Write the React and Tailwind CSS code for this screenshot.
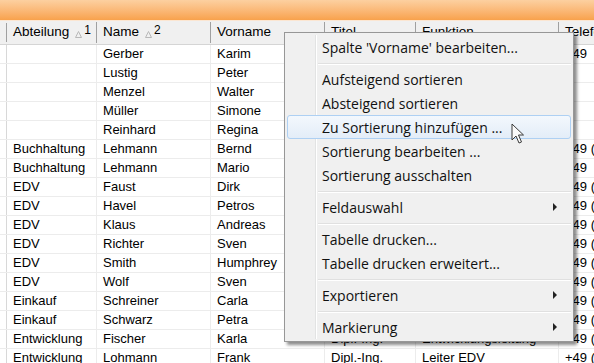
import React from 'react';

const rows = [
  ['', 'Gerber', 'Karim', '', '', '+49'],
  ['', 'Lustig', 'Peter', '', '', ''],
  ['', 'Menzel', 'Walter', '', '', ''],
  ['', 'Müller', 'Simone', '', '', ''],
  ['', 'Reinhard', 'Regina', '', '', ''],
  ['Buchhaltung', 'Lehmann', 'Bernd', 'Dipl.-Kfm.', 'Buchhalter', '+49 (0) 30'],
  ['Buchhaltung', 'Lehmann', 'Mario', '', 'Buchhalter', '+49'],
  ['EDV', 'Faust', 'Dirk', '', 'Administrator', '+49 (0) 30'],
  ['EDV', 'Havel', 'Petros', '', 'Entwickler', '+49 (0) 30'],
  ['EDV', 'Klaus', 'Andreas', '', 'Entwickler', '+49 (0) 30'],
  ['EDV', 'Richter', 'Sven', '', 'Support', '+49 (0) 30'],
  ['EDV', 'Smith', 'Humphrey', '', 'Support', '+49 (0) 30'],
  ['EDV', 'Wolf', 'Sven', '', 'Entwickler', '+49 (0) 30'],
  ['Einkauf', 'Schreiner', 'Carla', '', 'Einkauf', '+49 (0) 30'],
  ['Einkauf', 'Schwarz', 'Petra', '', 'Einkauf', '+49 (0) 30'],
  ['Entwicklung', 'Fischer', 'Karla', 'Dipl.-Ing.', 'Entwicklungsleitung', '+49 (0) 30'],
  ['Entwicklung', 'Lohmann', 'Frank', 'Dipl.-Ing.', 'Leiter EDV', '+49 (0) 30'],
];

const widths = ['w-[90px]', 'w-[114px]', 'w-[114px]', 'w-[91px]', 'w-[143px]', 'w-[80px]'];

function SortMark({ n }) {
  return (
    <span className="ml-[6px] flex items-start h-[14px]">
      <svg width="7" height="7" viewBox="0 0 7 7" className="mt-[5px]">
        <path d="M0.5 6.5 L3.5 0.5 L6.5 6.5 Z" fill="none" stroke="#b8b8b8" strokeWidth="1" />
      </svg>
      <span className="ml-[2px] text-[12px] leading-[9px]">{n}</span>
    </span>
  );
}

function Header() {
  const cols = [
    ['Abteilung', 1],
    ['Name', 2],
    ['Vorname'],
    ['Titel'],
    ['Funktion'],
    ['Telefon'],
  ];
  return (
    <div className="flex h-[25px] bg-[#f0f0f0] border-t border-t-[#fbe6d2] border-b border-b-[#d5d5d5] text-[13.5px]">
      <div className="w-[7px] shrink-0 border-r border-[#a0a0a0] my-[2px]" />
      {cols.map(([label, n], i) => (
        <div
          key={label}
          className={`${widths[i]} shrink-0 flex items-center pl-[6px] ${i < 5 ? 'border-r border-[#a0a0a0]' : ''} my-[1px]`}
        >
          <span>{label}</span>
          {n && <SortMark n={n} />}
        </div>
      ))}
    </div>
  );
}

function Row({ cells }) {
  return (
    <div className="flex h-[19px] border-b border-[#ececec]">
      <div className="w-[7px] shrink-0 border-r border-[#d8d8d8]" />
      {cells.map((c, i) => (
        <div
          key={i}
          className={`${widths[i]} shrink-0 flex items-center pl-[6px] whitespace-nowrap overflow-hidden ${i < 5 ? 'border-r border-[#ececec]' : ''}`}
        >
          {c}
        </div>
      ))}
    </div>
  );
}

function Arrow() {
  return (
    <svg width="5" height="8" viewBox="0 0 5 8">
      <path d="M0 0 L4 4 L0 8 Z" fill="#222" />
    </svg>
  );
}

function Item({ label, active, sub }) {
  return (
    <div
      className={`relative h-[24px] flex items-center pl-[34px] pr-[12px] rounded-[3px] border ${
        active
          ? 'border-[#aed0f3] bg-gradient-to-b from-[#f3f8fd] to-[#e3edf8]'
          : 'border-transparent'
      }`}
    >
      <span className="flex-1">{label}</span>
      {sub && <Arrow />}
    </div>
  );
}

function Sep() {
  return (
    <div className="h-[8px] pl-[31px] pt-[4px]">
      <div className="h-[1px] bg-[#e0e0e0] border-b border-white box-content" />
    </div>
  );
}

function Menu() {
  return (
    <div
      className="absolute left-[284px] top-[32px] w-[290px] bg-[#f0f0f0] border border-[#979797] p-[2px] shadow-[3px_3px_3px_rgba(0,0,0,0.45)] text-[#111]"
      style={{ fontFamily: '"Open Sans", "Noto Sans", sans-serif' }}
    >
      <div className="absolute left-[30px] top-[2px] bottom-[2px] w-[2px] border-l border-[#e2e3e3] bg-[#f0f0f0]">
        <div className="h-full w-[1px] bg-white" />
      </div>
      <div className="relative text-[14px]">
        <Item label="Spalte 'Vorname' bearbeiten..." />
        <Sep />
        <Item label="Aufsteigend sortieren" />
        <Item label="Absteigend sortieren" />
        <Item label="Zu Sortierung hinzufügen ..." active />
        <Item label="Sortierung bearbeiten ..." />
        <Item label="Sortierung ausschalten" />
        <Sep />
        <Item label="Feldauswahl" sub />
        <Sep />
        <Item label="Tabelle drucken..." />
        <Item label="Tabelle drucken erweitert..." />
        <Sep />
        <Item label="Exportieren" sub />
        <Sep />
        <Item label="Markierung" sub />
      </div>
    </div>
  );
}

function Cursor() {
  return (
    <svg
      className="absolute left-[511px] top-[123px]"
      width="14"
      height="22"
      viewBox="0 0 14 22"
    >
      <path
        d="M1 1 L1 17 L5 13 L8 20 L10.5 19 L7.5 12 L12.5 12 Z"
        fill="#fafafa"
        stroke="#3a3a3a"
        strokeWidth="1"
        strokeLinejoin="round"
      />
    </svg>
  );
}

export default function App() {
  return (
    <div
      className="relative w-[594px] h-[363px] overflow-hidden bg-white text-[13px] text-black"
      style={{ fontFamily: '"Liberation Sans", Arial, sans-serif' }}
    >
      <div className="h-[20px] bg-gradient-to-b from-[#fcd0a0] to-[#f8a24c]" />
      <Header />
      <div>
        {rows.map((r, i) => (
          <Row key={i} cells={r} />
        ))}
      </div>
      <Menu />
      <Cursor />
    </div>
  );
}
